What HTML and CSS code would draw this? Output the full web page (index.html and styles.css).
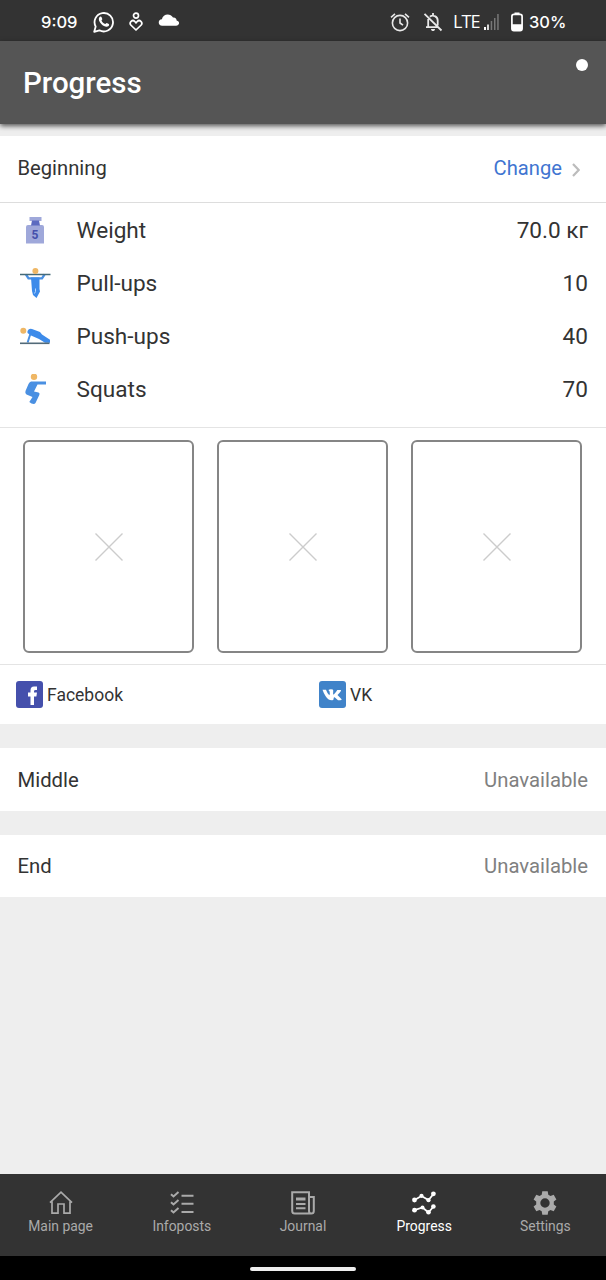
FILE: index.html
```html
<!DOCTYPE html>
<html lang="en">
<head>
<meta charset="utf-8">
<title>Progress</title>
<link rel="stylesheet" href="styles.css">
</head>
<body>
<div class="app">
  <div class="status">
    <div class="status-left">
      <span class="clock">9:09</span>
      <svg width="22" height="22" viewBox="0 0 22 22" fill="none" stroke="#fff" stroke-width="1.8"><path d="M1.2 20.8 2.7 15.6A9.2 9.2 0 1 1 6.4 19.3Z" stroke-linejoin="round"/><path d="M6.4 6.2C7 5.400 8.200 5.300 8.600 6.200L9.300 8C9.400 8.500 8.500 9.200 8.500 9.600 9.200 11.200 10.600 12.500 12.300 13.100 12.800 13.100 13.300 12 13.800 12.100L15.800 13C16.400 13.400 16.100 14.700 15.300 15.300 13.500 16.500 10.500 15.300 8.300 13 6.200 10.800 5 8.200 6.400 6.200Z" fill="#fff" stroke="none"/></svg>
      <svg width="14" height="20" viewBox="0 0 14 20" fill="none" stroke="#fff" stroke-width="1.7"><circle cx="7" cy="3.600" r="2.500"/><path d="M7 18 1.800 13C-.2 10.400 3.300 6.900 5.800 9.500L7 10.800 8.200 9.500C10.700 6.900 14.200 10.400 12.200 13Z" stroke-linejoin="round"/></svg>
      <svg class="cloud" width="22" height="12" viewBox="0 0 22 12"><path fill="#fff" d="M4.200 11.800C-.3 11.800-.4 5.600 3.900 5.300 4.800-.1 12.300-1.200 15 3.600 17.700 3.400 18.500 5 18.600 6.400 22.300 7.200 21.700 11.800 18 11.800Z"/></svg>
    </div>
    <div class="status-right">
      <svg width="20" height="20" viewBox="0 0 20 20" fill="none" stroke="#e8e8e8" stroke-width="1.600"><circle cx="10" cy="11" r="7.600"/><path d="M10 6.500V11l3 2.200M1 5.300 5 1.800M19 5.300 15 1.800"/></svg>
      <svg class="bell" width="20" height="20" viewBox="0 0 20 20" fill="none" stroke="#e8e8e8" stroke-width="1.800"><path d="M1.500 1.800 18.500 18.500M5.200 7V15M3 15.200H14.500M6.900 4.700C9.500 2.500 14.700 4 14.700 8.500V13.500M10 1V3.500"/><path d="M8 17h4c0 2.700-4 2.700-4 0Z" fill="#e8e8e8" stroke="none"/></svg>
      <span class="lte">LTE</span>
      <svg class="signal" width="15" height="16" viewBox="0 0 15 16"><path fill="#fff" d="M0 13h2v3H0zM3.200 10.500h1.600V16H3.200z"/><path fill="#777" d="M6.700 7h1.500v9H6.700zM10 4h1.500v12H10zM13.200 0h1.500v16h-1.500z"/></svg>
      <svg class="battery" width="12" height="20" viewBox="0 0 12 20"><rect x=".9" y="2.400" width="10.200" height="16.200" rx="2" fill="none" stroke="#fff" stroke-width="1.700"/><path fill="#fff" d="M3.500.5h5v2h-5zM1 12.300h10V18H1z"/></svg>
      <span class="percent">30%</span>
    </div>
  </div>
  <header class="header"><h1>Progress</h1><i class="dot"></i></header>

  <main class="main">
    <section class="card">
      <div class="card-head"><span>Beginning</span><a class="change">Change<svg width="8" height="14" viewBox="0 0 8 14" fill="none" stroke="#bcbcbc" stroke-width="2.200"><path d="M1 1 6.700 7 1 13"/></svg></a></div>
      <div class="stats">
        <div class="stat">
          <svg class="stat-icon" viewBox="0 0 32 32"><path fill="#9fa8da" d="M9.500 2h12v4h-12zM6 12q0-2 2-2h14q2 0 2 2v16.500H6z"/><path fill="#5c6bc0" d="M12 5.500h7l1 5h-9z"/><text class="weight-mark" x="15" y="23.500" text-anchor="middle">5</text></svg>
          <span class="stat-name">Weight</span><span>70.0 кг</span></div>
        <div class="stat">
          <svg class="stat-icon" viewBox="0 0 32 32"><path d="M6 6.500 8.500 10.300H22L24.500 6.500" fill="none" stroke="#4a90e2" stroke-width="2.300"/><path fill="#3d8bea" d="M11 9.500h8.500V21L20 23.500 16.500 30 13 27 12 23Z"/><path d="M15.500 20.500V23.500L14.500 25.500" stroke="#b8d8ff" fill="none"/><path d="M0 6.500H30.500" stroke="#456a78" stroke-width="1.500"/><circle cx="15.400" cy="3" r="3" fill="#efb765"/></svg>
          <span class="stat-name">Pull-ups</span><span>10</span></div>
        <div class="stat">
          <svg class="stat-icon" viewBox="0 0 32 32"><path d="M10.500 12.500 7.600 21.500" stroke="#4a90e2" stroke-width="2"/><path fill="#3d8bea" d="M7.500 10Q9 7 12 8L20 11 22 13.500 30 18.700V21.800H25L19 18 11 14.500 7.500 12Z"/><path d="M0 22.300H29.500" stroke="#526a78" stroke-width="1.600"/><circle cx="3.300" cy="9.800" r="3" fill="#efb765"/></svg>
          <span class="stat-name">Push-ups</span><span>40</span></div>
        <div class="stat">
          <svg class="stat-icon" viewBox="0 0 32 32"><path fill="#4a90e2" d="M11 7.500H26V10.600H17.500L14 17.500 18.500 18.500Q20.200 19 19.300 21L15.500 29Q14.500 30.500 11.500 29.500L9.300 28 12.500 23 6.500 20.500Q4.700 19.500 5.500 17L8.500 10Q9.300 8 11 7.500Z"/><circle cx="14" cy="2.800" r="3.200" fill="#efb765"/></svg>
          <span class="stat-name">Squats</span><span>70</span></div>
      </div>
      <div class="photos">
        <div class="photo"><svg width="28" height="28" viewBox="0 0 28 28"><path d="M.5.5l27 27m0-27-27 27"/></svg></div>
        <div class="photo"><svg width="28" height="28" viewBox="0 0 28 28"><path d="M.5.5l27 27m0-27-27 27"/></svg></div>
        <div class="photo"><svg width="28" height="28" viewBox="0 0 28 28"><path d="M.5.5l27 27m0-27-27 27"/></svg></div>
      </div>
      <div class="social">
        <a><svg width="27" height="27" viewBox="0 0 27 27"><rect width="27" height="27" rx="3" fill="#4550ac"/><path fill="#fff" d="M14.500 24V15.500h-2.500V11.500h2.500V9.500Q14.500 5.500 18 5.500h3v3.600h-1.500q-1.500 0-1.500 1.400v1h3l-.6 4h-2.400V24Z"/></svg><span>Facebook</span></a>
        <a><svg width="27" height="27" viewBox="0 0 27 27"><rect width="27" height="27" rx="3" fill="#4083c9"/><path fill="#fff" d="M3.500 8.800H7Q8.200 12.400 10.300 14.200 11.200 13 10.600 10.500L9.400 9Q10.500 8 13.600 8.400 14.400 8.700 14.200 10L14.100 13.200Q14.800 14.300 18.300 8.900H21.800Q23 9.400 18.500 14L22.600 18.200Q23 19.300 21 19.300H19L15.600 16.300Q14.600 16 14.500 18.200 14.500 19.300 13.200 19.300 9 19.500 6.500 15.100 4.600 12.100 3.500 8.800Z"/></svg><span>VK</span></a>
      </div>
    </section>
    <section class="card locked middle"><span>Middle</span><span class="unavailable">Unavailable</span></section>
    <section class="card locked end"><span>End</span><span class="unavailable">Unavailable</span></section>
  </main>

  <nav class="tabs">
    <a><svg width="24" height="24" viewBox="0 0 24 24" fill="none" stroke="#aaa" stroke-width="1.700"><path d="M1 11.600 12 1.200 23 11.600M3 10.500V22.200H9V13H15V22.200H21V10.500"/></svg><span>Main page</span></a>
    <a><svg width="24" height="24" viewBox="0 0 24 24" fill="none" stroke="#aaa" stroke-width="2"><path d="M1 3.200 3.500 5.500 8.500 1M1 11.200 3.500 13.500 8.500 9M1 19.200 3.500 21.500 8.500 17M11.500 4.700H23.500M11.500 12.800H23.500M11.500 21H23.500"/></svg><span>Infoposts</span></a>
    <a><svg width="24" height="24" viewBox="0 0 24 24" fill="none" stroke="#aaa" stroke-width="2"><path d="M18 20V1.300H1.200V20Q1.200 22.600 3.800 22.600H20.300Q22.800 22.600 22.800 20V6H18V20Q18 22.500 20.300 22.500"/><path d="M5 13H14.500M5 17.300H14.500"/><path d="M5 8H14.500" stroke-width="3"/></svg><span>Journal</span></a>
    <a class="active"><svg width="24" height="24" viewBox="0 0 24 24" fill="none" stroke="#fff" stroke-width="1.800"><path d="M2.500 9 9.500 5 16.500 9 21.500 3M2.500 19.200 10.500 16.500 16.500 21.500 21.500 15.500"/><g fill="#fff" stroke="none"><circle cx="2.500" cy="9" r="2.400"/><circle cx="9.500" cy="4.800" r="2.100"/><circle cx="16.500" cy="9.200" r="2.100"/><circle cx="21.400" cy="2.800" r="2.400"/><circle cx="2.500" cy="19.200" r="2.400"/><circle cx="10.500" cy="16.500" r="2"/><circle cx="16.500" cy="21.300" r="2.300"/><circle cx="21.400" cy="15.500" r="2.300"/></g></svg><span>Progress</span></a>
    <a><svg width="24" height="24" viewBox="0 0 24 24"><path fill="#aaa" fill-rule="evenodd" d="M9.300.3h5.400l.6 3.400 2.200 1.200 3.200-1.200 2.700 4.700-2.600 2.200v2.800l2.600 2.200-2.700 4.700-3.200-1.200-2.200 1.200-.6 3.400H9.300l-.6-3.400-2.200-1.200-3.200 1.200L.6 15.600l2.600-2.200v-2.800L.6 8.400l2.700-4.700 3.200 1.200 2.200-1.200ZM12 7.300a4.700 4.700 0 1 0 0 9.400 4.700 4.700 0 0 0 0-9.400Z"/></svg><span>Settings</span></a>
  </nav>
  <div class="system"><i class="pill"></i></div>
</div>
</body>
</html>
```
FILE: styles.css
```css
* { box-sizing: border-box; }
body { margin: 0; font-family: Roboto, sans-serif; color: #333; background: #eee; }
svg { display: block; flex: none; }
.app { width: 606px; height: 1280px; display: flex; flex-direction: column; }

.status { height: 41px; flex: none; background: #333; color: #fff; display: flex; justify-content: space-between; align-items: center; padding: 2px 40px 0 41px; font: 500 16.5px Inter, sans-serif; }
.status-left, .status-right { display: flex; align-items: center; }
.clock { width: 52px; }
.status-left svg + svg { margin-left: 14px; }
.status-left .cloud { margin: 0 0 3px 15px; }
.bell { margin-left: 13px; }
.lte { margin-left: 10px; width: 27px; font: 400 18px "Open Sans", sans-serif; letter-spacing: -.9px; position: relative; top: -1px; }
.signal { margin-left: 4px; }
.battery { margin-left: 12px; }
.percent { margin-left: 6px; width: 37px; }

.header { height: 83px; flex: none; position: relative; z-index: 1; background: #555; color: #fff; display: flex; justify-content: space-between; padding: 18px 18px 0 23px; box-shadow: 0 2px 5px rgba(0, 0, 0, .65); }
.header h1 { margin: 7px 0 0; font-size: 29.5px; line-height: 35px; font-weight: 500; }
.dot { width: 12px; height: 12px; border-radius: 50%; background: #fff; }

.main { flex: 1; display: flex; flex-direction: column; gap: 24px; padding-top: 12px; }
.card { background: #fff; }
.card-head { height: 67px; border-bottom: 1px solid #ddd; display: flex; justify-content: space-between; padding: 20px 26px 0 17.5px; font-size: 20.2px; line-height: 24px; }
.change { display: flex; gap: 10px; color: #4175d1; }
.change svg { margin-top: 7px; }
.stats { height: 225px; border-bottom: 1px solid #e4e4e4; padding: 1px 18px 0 20px; }
.stat { height: 53px; display: flex; align-items: center; font-size: 22.6px; }
.stat-icon { width: 32px; height: 32px; margin-right: 24.5px; }
.weight-mark { font: 700 12px Roboto, sans-serif; fill: #4550ac; }
.stat-name { flex: 1; }
.photos { height: 237px; border-bottom: 1px solid #e4e4e4; display: flex; justify-content: space-between; padding: 12px 24px 0 23px; }
.photo { width: 171px; height: 213px; border: 2px solid #858585; border-radius: 6px; display: grid; place-items: center; }
.photo path { stroke: #ccc; stroke-width: 1.4; }
.social { height: 59px; display: grid; grid-template-columns: 1fr 1fr; padding-left: 16px; font-size: 17.5px; }
.social a { display: flex; align-items: center; gap: 4px; }
.social a + a { margin-left: 8px; }

.locked { display: flex; justify-content: space-between; align-items: center; padding: 0 18px 0 17.5px; font-size: 20.3px; }
.middle { height: 63px; padding-top: 1px; }
.end { height: 62px; }
.unavailable { color: #808080; }

.tabs { height: 82px; flex: none; background: #333; display: grid; grid-template-columns: repeat(5, 1fr); padding-top: 17px; font-size: 13.9px; color: #aaa; }
.tabs a { display: flex; flex-direction: column; align-items: center; gap: 3px; line-height: 16px; }
.tabs .active { color: #fff; }
.system { height: 24px; flex: none; background: #000; display: flex; justify-content: center; padding-top: 11px; }
.pill { width: 106px; height: 4px; border-radius: 2px; background: #eee; }
```
